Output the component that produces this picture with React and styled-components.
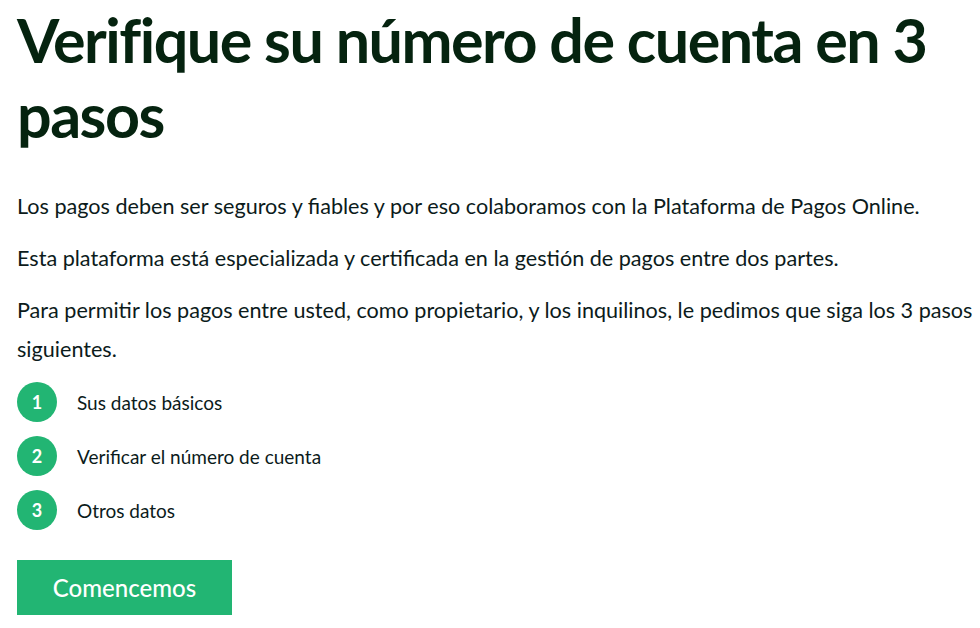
import React from "react";
import styled, { createGlobalStyle } from "styled-components";

const Global = createGlobalStyle`
  html, body { margin: 0; padding: 0; background: #ffffff; }
  body { font-family: Lato, "Open Sans", sans-serif; }
`;

const Page = styled.main`
  padding: 0 2px 0 17px;
  display: flex;
  flex-direction: column;
  align-items: flex-start;
`;

const Title = styled.h1`
  margin: 0;
  padding-top: 2px;
  font-size: 61px;
  line-height: 75px;
  font-weight: 700;
  color: #05230f;
  letter-spacing: -1.5px;
`;

const Para = styled.p`
  margin: ${(p) => (p.$first ? "35px" : "0")} 0 13px;
  font-size: 21.6px;
  line-height: 39px;
  color: #0c1b1b;
`;

const Steps = styled.ol`
  list-style: none;
  margin: 0;
  padding: 0;
  display: flex;
  flex-direction: column;
  gap: 14px;
`;

const Step = styled.li`
  display: flex;
  align-items: center;
  gap: 20px;
  font-size: 19px;
  color: #0c1b1b;
`;

const Badge = styled.span`
  width: 40px;
  height: 40px;
  border-radius: 50%;
  background: #22b573;
  color: #fff;
  font-weight: 700;
  font-size: 18px;
  display: flex;
  align-items: center;
  justify-content: center;
`;

const Button = styled.button`
  margin-top: 30px;
  width: 215px;
  height: 55px;
  border: 0;
  background: #22b573;
  color: #fff;
  font-family: inherit;
  font-size: 24px;
  font-weight: 500;
  cursor: pointer;
`;

const steps = ["Sus datos básicos", "Verificar el número de cuenta", "Otros datos"];

export default function App() {
  return (
    <>
      <Global />
      <Page>
        <Title>Verifique su número de cuenta en 3 pasos</Title>
        <Para $first>Los pagos deben ser seguros y fiables y por eso colaboramos con la Plataforma de Pagos Online.</Para>
        <Para>Esta plataforma está especializada y certificada en la gestión de pagos entre dos partes.</Para>
        <Para>Para permitir los pagos entre usted, como propietario, y los inquilinos, le pedimos que siga los 3 pasos siguientes.</Para>
        <Steps>
          {steps.map((s, i) => (
            <Step key={s}>
              <Badge>{i + 1}</Badge>
              {s}
            </Step>
          ))}
        </Steps>
        <Button>Comencemos</Button>
      </Page>
    </>
  );
}
